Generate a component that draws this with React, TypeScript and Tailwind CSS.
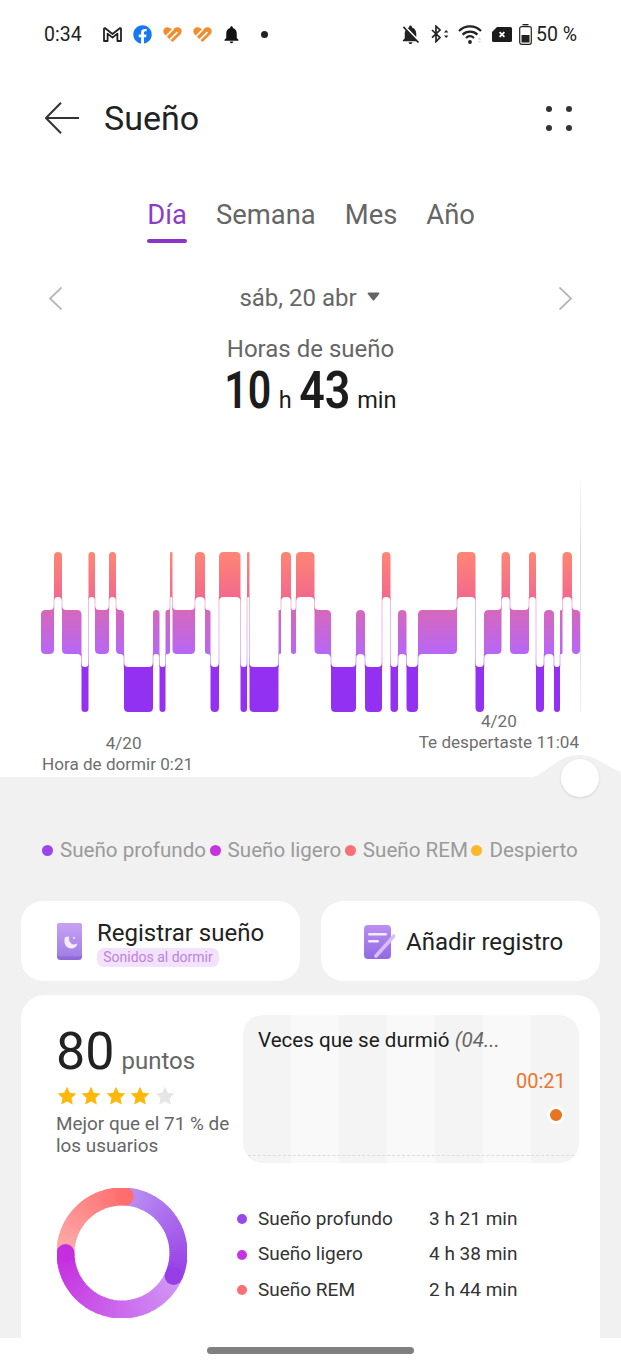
import React from 'react';
import { FaFacebook } from 'react-icons/fa';
import { MdNotifications, MdNotificationsOff } from 'react-icons/md';

// sleep stages: 0 = REM, 1 = light, 2 = deep
const BAND_TOP = [552, 610, 667];
const BAND_BOTTOM = [597, 654, 712];

const stages: [number, number, number][] = [
  [41, 54, 1], [54, 62, 0], [62, 81.5, 1], [81.5, 88.5, 2], [88.5, 95, 0], [95, 109, 1], [109, 116, 0],
  [116, 124, 1], [124, 153, 2], [153, 159.5, 1], [159.5, 165.5, 2], [165.5, 170, 1], [170, 172.5, 0],
  [172.5, 195, 1], [195, 205, 0], [205, 210.5, 1], [210.5, 219, 2], [219, 240.5, 0], [240.5, 247, 2],
  [247, 249.5, 0], [249.5, 278.5, 2], [278.5, 281, 1], [281, 291, 0], [291, 296, 1], [296, 314.5, 0],
  [314.5, 331, 1], [331, 356, 2], [356, 365, 1], [365, 382, 2], [382, 390.5, 0], [390.5, 398, 2],
  [398, 406.5, 1], [406.5, 418, 2], [418, 457, 1], [457, 475.5, 0], [475.5, 484, 2], [484, 501.5, 1],
  [501.5, 510, 0], [510, 529, 1], [529, 536, 0], [536, 544, 2], [544, 554, 1], [554, 560, 2],
  [560, 562.5, 1], [562.5, 572, 0], [572, 580, 1],
];

function barPath(i: number) {
  const [x0, x1, b] = stages[i];
  const l = i > 0 ? stages[i - 1][2] : b;
  const r = i < stages.length - 1 ? stages[i + 1][2] : b;
  const t = BAND_TOP[b];
  const bt = BAND_BOTTOM[b];
  const rad = Math.min(4.5, (x1 - x0) / 2);
  const p: string[] = [];
  p.push(l < b ? `M${x0} ${t - rad}` : `M${x0} ${t + rad}`);
  p.push(`Q${x0} ${t} ${x0 + rad} ${t}`);
  p.push(`L${x1 - rad} ${t}`);
  p.push(r < b ? `Q${x1} ${t} ${x1} ${t - rad}` : `Q${x1} ${t} ${x1} ${t + rad}`);
  p.push(r > b ? `L${x1} ${bt + rad}` : `L${x1} ${bt - rad}`);
  p.push(`Q${x1} ${bt} ${x1 - rad} ${bt}`);
  p.push(`L${x0 + rad} ${bt}`);
  p.push(l > b ? `Q${x0} ${bt} ${x0} ${bt + rad}` : `Q${x0} ${bt} ${x0} ${bt - rad}`);
  p.push('Z');
  return p.join(' ');
}

function SleepChart() {
  return (
    <svg width="621" height="232" viewBox="0 480 621 232" className="block">
      <defs>
        <linearGradient id="stage" gradientUnits="userSpaceOnUse" x1="0" y1="552" x2="0" y2="712">
          <stop offset="0" stopColor="#fe8674" />
          <stop offset="0.28" stopColor="#f36a8c" />
          <stop offset="0.36" stopColor="#d668ba" />
          <stop offset="0.64" stopColor="#b666f7" />
          <stop offset="0.72" stopColor="#9431f1" />
          <stop offset="1" stopColor="#9331f2" />
        </linearGradient>
        <linearGradient id="marker" x1="0" y1="0" x2="0" y2="1">
          <stop offset="0" stopColor="#e6dcf5" stopOpacity="0.2" />
          <stop offset="0.3" stopColor="#e0d4f5" />
          <stop offset="0.8" stopColor="#e6dcf5" />
          <stop offset="1" stopColor="#f3eefa" />
        </linearGradient>
      </defs>
      <rect x="580" y="480" width="1" height="232" fill="url(#marker)" />
      {stages.slice(1).map((s, i) => {
        const prev = stages[i][2];
        const cur = s[2];
        const up = Math.min(prev, cur);
        const down = Math.max(prev, cur);
        return (
          <rect
            key={i}
            x={s[0] - 0.5}
            y={BAND_BOTTOM[up]}
            width="1"
            height={BAND_TOP[down] - BAND_BOTTOM[up]}
            fill="url(#stage)"
            opacity="0.45"
          />
        );
      })}
      {stages.map((_, i) => (
        <path key={i} d={barPath(i)} fill="url(#stage)" />
      ))}
    </svg>
  );
}

function mix(a: number[], b: number[], t: number) {
  return `rgb(${a.map((v, i) => Math.round(v + (b[i] - v) * t)).join(',')})`;
}

const ringArcs = [
  { from: 3, to: 114, c0: [186, 146, 242], c1: [152, 62, 230] },
  { from: 114, to: 270, c0: [208, 152, 246], c1: [197, 45, 223] },
  { from: 270, to: 363, c0: [255, 172, 172], c1: [255, 110, 110] },
];

function polar(deg: number, r = 56.5) {
  const a = ((deg - 90) * Math.PI) / 180;
  return [65 + r * Math.cos(a), 65 + r * Math.sin(a)];
}

function SleepRing() {
  return (
    <svg width="130" height="130" viewBox="0 0 130 130" className="block shrink-0">
      {ringArcs.map((arc, k) => {
        const n = 50;
        const step = (arc.to - arc.from) / n;
        return Array.from({ length: n }, (_, i) => {
          const [x0, y0] = polar(arc.from + i * step - 0.4);
          const [x1, y1] = polar(arc.from + (i + 1) * step + 0.4);
          return (
            <path
              key={`${k}-${i}`}
              d={`M${x0} ${y0} A56.5 56.5 0 0 1 ${x1} ${y1}`}
              fill="none"
              strokeWidth="18"
              stroke={mix(arc.c0, arc.c1, i / (n - 1))}
            />
          );
        });
      })}
      {ringArcs.map((arc, k) => {
        const [x, y] = polar(arc.to);
        return <circle key={k} cx={x} cy={y} r="9" fill={mix(arc.c1, arc.c1, 0)} />;
      })}
    </svg>
  );
}

function HealthHeart() {
  return (
    <svg width="19" height="15" viewBox="0 0 19 15">
      <path
        d="M9.5 15 L1.2 7 C-1 4 1 0.2 4.4 0.2 C6.4 0.2 8 1.4 9.5 3 C11 1.4 12.6 0.2 14.6 0.2 C18 0.2 20 4 17.8 7 Z"
        fill="#f28c2c"
      />
      <path d="M3.5 8.8 L10.4 2 M7.2 12.4 L14.4 5.2" stroke="#fff" strokeWidth="1.7" fill="none" />
    </svg>
  );
}

function StatusBar() {
  return (
    <div className="h-[68px] relative flex items-center justify-between pl-[44px] pr-[44px] text-[#222]">
      <div className="flex items-center">
        <span className="text-[19.5px] leading-none w-[59px] mt-[2px]">0:34</span>
        <svg width="19" height="15" viewBox="0 0 19 15" className="mr-[11px]">
          <path
            d="M1 14 V2 Q1 0.8 2.2 1.2 L9.5 7 L16.8 1.2 Q18 0.8 18 2 V14 H14.4 V6.6 L9.5 10.6 L4.6 6.6 V14 Z"
            fill="none"
            stroke="#222"
            strokeWidth="1.8"
            strokeLinejoin="round"
          />
        </svg>
        <FaFacebook size={19} color="#1877f2" className="mr-[11px]" />
        <span className="mr-[11px]"><HealthHeart /></span>
        <span className="mr-[11px]"><HealthHeart /></span>
        <MdNotifications size={21} color="#111" className="ml-[-2px]" />
        <span className="ml-[19px] w-[7px] h-[7px] rounded-full bg-[#222]" />
      </div>
      <div className="flex items-center">
        <MdNotificationsOff size={23} color="#222" className="mr-[9px]" />
        <svg width="18" height="18" viewBox="0 0 18 18" className="mr-[9px]">
          <path d="M1 5 L9 12.6 L5 16.6 V1.2 L9 5 L1 12.6" fill="none" stroke="#222" strokeWidth="1.7" />
          <path d="M13 7.5 L15.2 5 L17.4 7.5 Z M13 10.5 L15.2 13 L17.4 10.5 Z" fill="#222" />
        </svg>
        <svg width="25" height="20" viewBox="0 0 25 20" className="mr-[9px]">
          <path d="M1 7 C7 0.8 17 0.8 23 7" fill="none" stroke="#222" strokeWidth="2.2" />
          <path d="M4.6 10.6 C8.6 6.6 15.4 6.6 19.4 10.6" fill="none" stroke="#222" strokeWidth="2.2" />
          <path d="M8 14 C10.4 11.8 13.6 11.8 16 14" fill="none" stroke="#222" strokeWidth="2.2" />
          <circle cx="12" cy="18" r="1.9" fill="#222" />
          <path d="M19.5 15.6 L21.4 13.6 L23.3 15.6 Z" fill="#ccc" />
          <path d="M19.5 17 L21.4 19 L23.3 17 Z" fill="#ddd" />
        </svg>
        <svg width="20" height="15" viewBox="0 0 20 15" className="mr-[7px]">
          <path d="M5 0 H18.5 Q20 0 20 1.5 V13.5 Q20 15 18.5 15 H1.5 Q0 15 0 13.5 V5 Z" fill="#1c1c1c" />
          <path d="M7.6 5.2 L12.4 9.8 M12.4 5.2 L7.6 9.8" stroke="#fff" strokeWidth="1.8" />
        </svg>
        <svg width="13" height="21" viewBox="0 0 13 21" className="mr-[4px]">
          <rect x="3.5" y="0" width="6" height="1.4" fill="#222" />
          <rect x="0.7" y="2.6" width="11.6" height="17.7" rx="2" fill="none" stroke="#222" strokeWidth="1.2" />
          <rect x="2.5" y="11" width="8" height="7.5" fill="#222" />
        </svg>
        <span className="text-[19.5px] leading-none w-[41px] whitespace-nowrap mt-[2px]">50 %</span>
      </div>
    </div>
  );
}

function Header() {
  return (
    <div className="h-[100px] flex items-center justify-between pl-[45px] pr-[49px]">
      <div className="flex items-center gap-[25px]">
        <svg width="34" height="32" viewBox="0 0 34 32">
          <path d="M34 16 H1 M16 0.7 L1 16 L16 31.3" fill="none" stroke="#333" strokeWidth="2" />
        </svg>
        <span className="text-[34px] leading-none text-[#222]">Sueño</span>
      </div>
      <div className="grid grid-cols-2 gap-x-[14px] gap-y-[13px]">
        <span className="w-[6px] h-[6px] rounded-full bg-[#333]" />
        <span className="w-[6px] h-[6px] rounded-full bg-[#333]" />
        <span className="w-[6px] h-[6px] rounded-full bg-[#333]" />
        <span className="w-[6px] h-[6px] rounded-full bg-[#333]" />
      </div>
    </div>
  );
}

function Tabs() {
  return (
    <div className="mt-[22px] flex justify-center gap-[29px] pl-[1px] text-[27.4px] leading-[47px] text-[#666]">
      <div className="flex flex-col items-center w-[40px] pt-[2px]">
        <span className="text-[#8d3bc9]">Día</span>
        <span className="w-[40px] h-[4px] rounded-full bg-[#8a35c7]" />
      </div>
      <span className="pt-[2px]">Semana</span>
      <span className="pt-[2px]">Mes</span>
      <span className="pt-[2px]">Año</span>
    </div>
  );
}

function DateRow() {
  return (
    <div className="mt-[40px] h-[30px] flex items-center justify-between pl-[49px] pr-[49px]">
      <svg width="13" height="23" viewBox="0 0 13 23">
        <path d="M12.5 0.5 L1 11.5 L12.5 22.5" fill="none" stroke="#b5b5b5" strokeWidth="1.8" />
      </svg>
      <div className="flex items-center gap-[10px] mr-[2px] text-[24px] text-[#666] leading-none">
        <span>sáb, 20 abr</span>
        <svg width="13" height="9" viewBox="0 0 13 9" className="mt-[-4px]">
          <path d="M1.5 0.5 H11.5 Q13 0.5 12.2 2 L7.4 8 Q6.5 9 5.6 8 L0.8 2 Q0 0.5 1.5 0.5 Z" fill="#666" />
        </svg>
      </div>
      <svg width="13" height="23" viewBox="0 0 13 23">
        <path d="M0.5 0.5 L12 11.5 L0.5 22.5" fill="none" stroke="#b5b5b5" strokeWidth="1.8" />
      </svg>
    </div>
  );
}

function Duration() {
  return (
    <div className="flex flex-col items-center">
      <div className="mt-[21px] text-[24px] leading-[30px] text-[#666]">Horas de sueño</div>
      <div className="h-[54px] flex items-baseline justify-center text-[#1c1c1c] text-[23.5px] leading-[54px]">
        <span className="inline-block origin-center scale-x-[0.79] mx-[-6px] font-semibold text-[52px]">10</span>
        <span className="ml-[7px] mr-[7px]">h</span>
        <span className="inline-block origin-center scale-x-[0.86] mx-[-4px] font-semibold text-[52px]">43</span>
        <span className="ml-[7px]">min</span>
      </div>
    </div>
  );
}

function ChartLabels() {
  return (
    <div className="h-[65px] flex items-end justify-between pl-[42px] pr-[42px] text-[17.1px] leading-[21px] text-[#6e6e6e]">
      <div className="pb-[2px] text-center">
        <div className="pl-[12px]">4/20</div>
        <div>Hora de dormir 0:21</div>
      </div>
      <div className="pb-[24px] text-center">
        <div>4/20</div>
        <div>Te despertaste 11:04</div>
      </div>
    </div>
  );
}

const legend = [
  { label: 'Sueño profundo', color: 'bg-[#9a46e8]' },
  { label: 'Sueño ligero', color: 'bg-[#c733e0]' },
  { label: 'Sueño REM', color: 'bg-[#fa7074]' },
  { label: 'Despierto', color: 'bg-[#fbb829]' },
];

const breakdown = [
  { label: 'Sueño profundo', value: '3 h 21 min', color: 'bg-[#9a46e8]' },
  { label: 'Sueño ligero', value: '4 h 38 min', color: 'bg-[#c733e0]' },
  { label: 'Sueño REM', value: '2 h 44 min', color: 'bg-[#fa7074]' },
];

function PhoneIcon() {
  return (
    <svg width="25" height="37" viewBox="0 0 25 37">
      <defs>
        <linearGradient id="phone" x1="0" y1="0" x2="0" y2="1">
          <stop offset="0" stopColor="#c7a2f3" />
          <stop offset="1" stopColor="#a27fe6" />
        </linearGradient>
      </defs>
      <rect x="0" y="0" width="25" height="37" rx="3.5" fill="#8f6ad8" />
      <rect x="0" y="0" width="25" height="33.5" rx="3" fill="url(#phone)" />
      <path d="M8 14 C6 20 9 26 15 25.6 C18 25.4 20 23 20.4 20.6 C17 22.6 11 21 12 13.4 C10.4 13.4 9 13.6 8 14 Z" fill="#f3ecfd" />
      <circle cx="17" cy="15" r="1" fill="#f3ecfd" />
    </svg>
  );
}

function NoteIcon() {
  return (
    <svg width="31" height="34" viewBox="0 0 31 34">
      <defs>
        <linearGradient id="note" x1="0" y1="0" x2="0" y2="1">
          <stop offset="0" stopColor="#bb8ff2" />
          <stop offset="1" stopColor="#9269e4" />
        </linearGradient>
      </defs>
      <rect x="0" y="0" width="27" height="34" rx="4" fill="url(#note)" />
      <rect x="4" y="8" width="19" height="2.6" rx="1.3" fill="#f3ecfd" />
      <rect x="4" y="15" width="11" height="2.6" rx="1.3" fill="#f3ecfd" />
      <path d="M12 31 L30 11" stroke="#d9bff8" strokeWidth="3.6" strokeLinecap="round" />
    </svg>
  );
}

function ActionCards() {
  return (
    <div className="mt-[40px] grid grid-cols-2 gap-[21px] px-[21px]">
      <div className="h-[80px] rounded-[22px] bg-white flex items-center pl-[36px] gap-[15px]">
        <PhoneIcon />
        <div className="flex flex-col items-start mt-[4px]">
          <span className="text-[24px] leading-[27px] text-[#222] whitespace-nowrap">Registrar sueño</span>
          <span className="mt-[1px] h-[19px] w-[122px] rounded-[7px] bg-[#f3e2fb] text-center text-[14px] leading-[19px] text-[#bd82e0] whitespace-nowrap">
            Sonidos al dormir
          </span>
        </div>
      </div>
      <div className="h-[80px] rounded-[22px] bg-white flex items-center pl-[43px] gap-[11px]">
        <span className="mt-[2px]"><NoteIcon /></span>
        <span className="text-[24px] text-[#222] whitespace-nowrap mt-[2px]">Añadir registro</span>
      </div>
    </div>
  );
}

function Star({ on }: { on: boolean }) {
  return (
    <svg width="20" height="20" viewBox="0 0 20 20">
      <path
        d="M10 0.8 L12.8 6.8 L19.4 7.6 L14.5 12.1 L15.8 18.6 L10 15.4 L4.2 18.6 L5.5 12.1 L0.6 7.6 L7.2 6.8 Z"
        fill={on ? '#fdb90b' : '#e6e6e6'}
      />
    </svg>
  );
}

function Score() {
  return (
    <div className="w-[187px] shrink-0 pl-[35px] box-content">
      <div className="flex items-baseline h-[66px] leading-[66px] mt-[24px]">
        <span className="text-[52px] text-[#222]">80</span>
        <span className="ml-[7px] text-[24px] text-[#666]">puntos</span>
      </div>
      <div className="flex gap-[4.4px] mt-[1px] ml-[1px]">
        <Star on />
        <Star on />
        <Star on />
        <Star on />
        <Star on={false} />
      </div>
      <p className="mt-[7px] text-[18.9px] leading-[22px] text-[#666]">Mejor que el 71 % de los usuarios</p>
    </div>
  );
}

function TimesPanel() {
  return (
    <div className="relative h-[148px] w-[336px] rounded-[20px] overflow-hidden grid grid-cols-7 mt-[20px]">
      <div className="bg-[#f4f4f4]" />
      <div className="bg-[#f9f9f9]" />
      <div className="bg-[#f4f4f4]" />
      <div className="bg-[#f9f9f9]" />
      <div className="bg-[#f4f4f4]" />
      <div className="bg-[#f9f9f9]" />
      <div className="bg-[#f4f4f4]" />
      <div className="absolute left-[15px] top-[11px] text-[20.6px] leading-[28px] text-[#1c1c1c] whitespace-nowrap">
        Veces que se durmió <em className="text-[#666]">(04...</em>
      </div>
      <div className="absolute left-[273px] top-[52px] text-[20px] leading-[28px] text-[#e8762c]">00:21</div>
      <div className="absolute left-[304px] top-[91px] w-[18px] h-[18px] rounded-full bg-[#e8721f] border-[3px] border-white" />
      <div className="absolute left-0 right-0 top-[140px] border-t border-dashed border-[#dcdcdc]" />
    </div>
  );
}

function Breakdown() {
  return (
    <div className="flex items-center mt-[25px] pl-[36px]">
      <SleepRing />
      <div className="ml-[50px] mt-[3px] flex flex-col gap-[7.5px]">
        {breakdown.map(row => (
          <div key={row.label} className="flex items-center h-[28px] text-[19px] text-[#333]">
            <span className={`w-[10px] h-[10px] rounded-full ${row.color}`} />
            <span className="ml-[11px] w-[171px]">{row.label}</span>
            <span>{row.value}</span>
          </div>
        ))}
      </div>
    </div>
  );
}

export default function App() {
  return (
    <div className="w-[621px] h-[1366px] bg-white flex flex-col overflow-hidden [font-family:Roboto,sans-serif]">
      <StatusBar />
      <Header />
      <Tabs />
      <DateRow />
      <Duration />
      <div className="mt-[62px]">
        <SleepChart />
      </div>
      <ChartLabels />
      <div className="relative flex-1 min-h-0 bg-[#f1f1f1]">
        <svg width="98" height="24" viewBox="0 0 98 24" className="absolute right-0 top-[-22px]">
          <path d="M0 24 C22 24 30 0 57 0 C72 0 82 11 98 17 V24 Z" fill="#f1f1f1" />
        </svg>
        <div className="absolute left-[561px] top-[-18px] w-[38px] h-[38px] rounded-full bg-white shadow-[0_1px_3px_rgba(0,0,0,0.12)]" />
        <div className="pt-[62px] pl-[42px] flex items-center h-[84px] text-[20.6px] leading-none text-[#9a9a9a] whitespace-nowrap">
          {legend.map((item, i) => (
            <div key={item.label} className={i === 0 ? 'flex items-center' : 'flex items-center ml-[3.5px]'}>
              <span className={`w-[11px] h-[11px] rounded-full ${item.color}`} />
              <span className="ml-[7px]">{item.label}</span>
            </div>
          ))}
        </div>
        <ActionCards />
        <div className="mt-[14px] mx-[21px] h-[343px] rounded-t-[24px] bg-white">
          <div className="flex">
            <Score />
            <TimesPanel />
          </div>
          <Breakdown />
        </div>
      </div>
      <div className="h-[28px] shrink-0 bg-white flex justify-center pt-[9px]">
        <div className="w-[207px] h-[7px] rounded-full bg-[#808080]" />
      </div>
    </div>
  );
}
